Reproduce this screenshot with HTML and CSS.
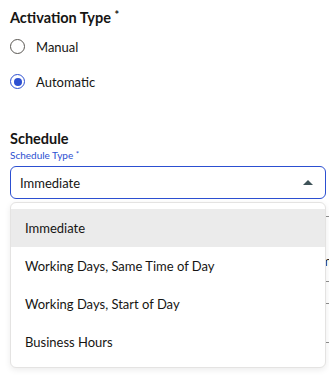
FILE: index.html
```html
<!DOCTYPE html>
<html>
  <head>
    <meta charset="UTF-8">
    <title>Activation Settings</title>
    <link rel="stylesheet" href="styles.css">
  </head>
  <body>
    <main>
      <section class="group">
        <h2 class="group-title">Activation Type <span class="req">*</span></h2>
        <label class="radio">
          <span class="radio-dot"></span>
          <span>Manual</span>
        </label>
        <label class="radio checked">
          <span class="radio-dot"></span>
          <span>Automatic</span>
        </label>
      </section>

      <section class="group schedule">
        <h2 class="group-title">Schedule</h2>
        <div class="field">
          <div class="field-label">Schedule Type <span class="req">*</span></div>
          <div class="select">
            <span>Immediate</span>
            <svg class="caret" width="10" height="6" viewBox="0 0 10 6">
              <path d="M0 6 L5 1 L10 6 Z" fill="#3f5358"/>
            </svg>
          </div>

          <!-- content that sits under the open menu -->
          <div class="behind">
            <div class="behind-row r1"></div>
            <div class="behind-row r2"><span>Time</span></div>
            <div class="behind-row r3"></div>
            <div class="behind-row r4"></div>
          </div>

          <ul class="menu">
            <li class="menu-item active">Immediate</li>
            <li class="menu-item">Working Days, Same Time of Day</li>
            <li class="menu-item">Working Days, Start of Day</li>
            <li class="menu-item">Business Hours</li>
          </ul>
        </div>
      </section>
    </main>
  </body>
</html>
```

FILE: styles.css
```css
*{
  box-sizing: border-box;
}
html, body{
  margin: 0;
  padding: 0;
  background: #fff;
}
body{
  font-family: "Lato", "Noto Sans", sans-serif;
  color: #161513;
}
main{
  padding: 5px 0 0 10px;
  width: 329px;
  height: 375px;
  overflow: hidden;
}
.group-title{
  margin: 0;
  font-size: 14.5px;
  font-weight: 700;
  line-height: 20px;
}
.group-title .req{
  font-size: 11px;
  vertical-align: 4px;
}
.radio{
  display: flex;
  align-items: center;
  gap: 11px;
  height: 35px;
  font-size: 13px;
}
.group-title + .radio{
  margin-top: 1px;
}
.radio-dot{
  width: 15px;
  height: 15px;
  border: 1.5px solid #5a5753;
  border-radius: 50%;
  display: flex;
  align-items: center;
  justify-content: center;
}
.radio.checked .radio-dot{
  border-color: #2c4fd1;
}
.radio.checked .radio-dot::after{
  content: "";
  width: 8px;
  height: 8px;
  border-radius: 50%;
  background: #2c4fd1;
}
.schedule{
  margin-top: 30px;
}
.field{
  position: relative;
  width: 316px;
}
.field-label{
  font-size: 10px;
  color: #2c4fd1;
  line-height: 14px;
  margin-top: -2px;
  margin-bottom: 4px;
}
.field-label .req{
  font-size: 8px;
  vertical-align: 2px;
}
.select{
  height: 33px;
  border: 1.5px solid #2c4fd1;
  border-radius: 6px;
  display: flex;
  align-items: center;
  justify-content: space-between;
  padding: 0 12px 0 9px;
  font-size: 13px;
}
.caret{
  display: block;
  margin-top: -2px;
}
.behind{
  width: 340px;
}
.behind-row{
  border-bottom: 1px solid #8f8f8f;
  font-size: 13px;
  display: flex;
  align-items: flex-end;
  padding-left: 300px;
}
.behind-row.r1{
  height: 18px;
}
.behind-row.r2{
  height: 65px;
  padding-bottom: 12px;
}
.behind-row.r3{
  height: 22px;
}
.behind-row.r4{
  height: 39px;
}
.menu{
  position: absolute;
  top: 55px;
  left: 0;
  width: 316px;
  margin: 0;
  padding: 6px 0;
  list-style: none;
  background: #fff;
  border: 1px solid #e4e3e2;
  border-radius: 6px;
  box-shadow: 0 2px 6px rgba(0, 0, 0, 0.08);
}
.menu-item{
  height: 38px;
  display: flex;
  align-items: center;
  padding-left: 14px;
  font-size: 13px;
}
.menu-item.active{
  background: #ebebeb;
}
```
